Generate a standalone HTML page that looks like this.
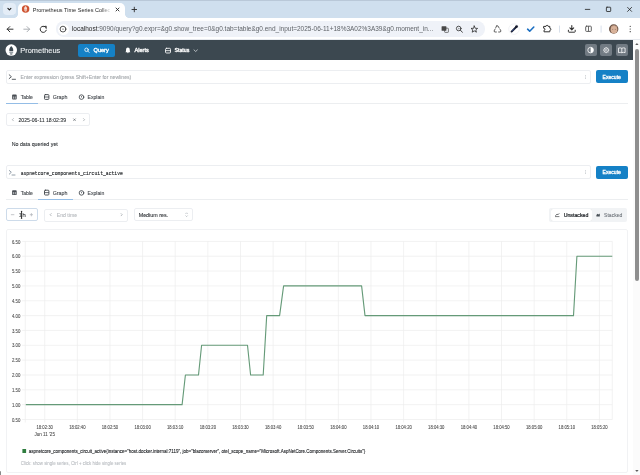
<!DOCTYPE html>
<html><head><meta charset="utf-8">
<style>
html,body{margin:0;padding:0;width:640px;height:475px;overflow:hidden;background:#fff;font-family:"Liberation Sans",sans-serif;}
.a{position:absolute;box-sizing:border-box;}
svg{position:absolute;overflow:visible;will-change:transform;}
.ic{fill:none;stroke-linecap:round;stroke-linejoin:round;}
.box{position:absolute;box-sizing:border-box;border:0.7px solid #eceef1;border-radius:2px;background:#fff;}
</style></head><body>
<!-- ============ CHROME TAB STRIP ============ -->
<div class="a" style="left:0;top:0;width:640px;height:17.8px;background:#cfdfee"></div>
<div class="a" style="left:0;top:0;width:640px;height:1px;background:#b9c8d8"></div>
<div class="a" style="left:2.6px;top:2.8px;width:13px;height:12.6px;border-radius:4px;background:#e4edf7"></div>
<div class="a" style="left:18px;top:2.6px;width:107px;height:17px;background:#fff;border-radius:5px 5px 0 0"></div>
<div class="a" style="left:14px;top:13.8px;width:4px;height:4px;background:radial-gradient(circle at 0 0,#cfdfee 3.6px,#fff 4.2px)"></div>
<div class="a" style="left:125px;top:13.8px;width:4px;height:4px;background:radial-gradient(circle at 100% 0,#cfdfee 3.6px,#fff 4.2px)"></div>
<svg style="left:0;top:0" width="640" height="40">
  <path d="M7.9 8.3 L9.4 9.8 L10.9 8.3" class="ic" stroke="#1f1f1f" stroke-width="1.1"/>
  <!-- favicon -->
  <circle cx="25.6" cy="8.95" r="3.75" fill="#cf5533"/>
  <path d="M25.6 6.1 C24.1 7.3 24 8.6 24.2 9.8 L27 9.8 C27.2 8.6 27.1 7.3 25.6 6.1 Z M24.3 10.3 h2.6 v0.8 h-2.6 Z" fill="#f4ddd5"/>
  <path d="M24.9 11.5 h1.4" stroke="#f4ddd5" stroke-width="0.5"/>
  <!-- tab close -->
  <path d="M116 8 L119 11 M119 8 L116 11" class="ic" stroke="#2a2a2a" stroke-width="0.9"/>
  <!-- new tab plus -->
  <path d="M134.3 7.2 V11.8 M132 9.5 H136.6" class="ic" stroke="#2a2a2a" stroke-width="0.9"/>
  <!-- window controls -->
  <path d="M585.3 9.4 H589.8" class="ic" stroke="#1f1f1f" stroke-width="0.8"/>
  <rect x="606.4" y="7.2" width="4.3" height="4.3" rx="0.6" class="ic" stroke="#1f1f1f" stroke-width="0.8"/>
  <path d="M627.6 7.4 L631.6 11.4 M631.6 7.4 L627.6 11.4" class="ic" stroke="#1f1f1f" stroke-width="0.8"/>
</svg>

<!-- ============ CHROME TOOLBAR ============ -->
<div class="a" style="left:0;top:17.8px;width:640px;height:22.2px;background:#fff;border-radius:0 4px 0 0"></div>
<div class="a" style="left:0;top:39.3px;width:640px;height:0.7px;background:#e6e9ee"></div>
<div class="a" style="left:55.8px;top:21.3px;width:429.2px;height:15.6px;border-radius:7.8px;background:#eff2f8"></div>
<div class="a" style="left:57.5px;top:23.6px;width:11px;height:11px;border-radius:50%;background:#fff"></div>
<svg style="left:0;top:0" width="640" height="40">
  <!-- back -->
  <path d="M13 29.2 H7.2 M9.8 26.6 L7.2 29.2 L9.8 31.8" class="ic" stroke="#2a2a2a" stroke-width="0.95"/>
  <!-- forward -->
  <path d="M23.8 29.2 H29.6 M27 26.6 L29.6 29.2 L27 31.8" class="ic" stroke="#a8abb0" stroke-width="0.95"/>
  <!-- reload -->
  <path d="M45.6 27.2 A3.1 3.1 0 1 0 46.3 30.2" class="ic" stroke="#2a2a2a" stroke-width="0.95"/>
  <path d="M43.9 26.6 L46.2 26.2 L46.2 28.4" class="ic" stroke="#2a2a2a" stroke-width="0.95"/>
  <!-- site info -->
  <circle cx="63" cy="29.1" r="2.9" class="ic" stroke="#2a2a2a" stroke-width="0.8"/>
  <circle cx="63" cy="29.1" r="0.55" fill="#2a2a2a"/>
  <!-- translate -->
  <rect x="441.6" y="26.2" width="4.8" height="4.6" rx="0.6" fill="#474747"/>
  <rect x="444.6" y="28.2" width="3.8" height="4.2" rx="0.6" fill="none" stroke="#474747" stroke-width="0.7"/>
  <!-- zoom -->
  <circle cx="458.7" cy="28.5" r="2.3" class="ic" stroke="#2a2a2a" stroke-width="0.8"/>
  <path d="M460.4 30.2 L462.4 32.2" class="ic" stroke="#2a2a2a" stroke-width="0.9"/>
  <path d="M458 28.6 H459.6 M458.8 27.8 V29.4" stroke="#6a6a6a" stroke-width="0.45"/>
  <!-- star -->
  <path d="M474.3 26 L475.3 28.3 L477.6 28.4 L475.8 29.9 L476.4 32.2 L474.3 30.9 L472.2 32.2 L472.8 29.9 L471 28.4 L473.3 28.3 Z" class="ic" stroke="#2a2a2a" stroke-width="0.8"/>
  <!-- recycle-like ext -->
  <path d="M496.6 25.9 L497.9 25.9 L499.2 28.1 M500.1 29.4 L501 31 L500.3 32 L498.6 32 M496.4 32 L494.6 32 L494 31 L495.2 28.9 M495.8 27.6 L496.6 25.9" class="ic" stroke="#474747" stroke-width="0.85"/>
  <!-- eyedropper in circle -->
  <circle cx="514" cy="29.1" r="5.3" fill="#fff" stroke="#eceef2" stroke-width="0.7"/>
  <path d="M511.6 31.6 L516.2 27" class="ic" stroke="#161b2e" stroke-width="1.9"/>
  <circle cx="516.6" cy="26.6" r="1.35" fill="#161b2e"/>
  <path d="M512.2 31 L514.2 29" class="ic" stroke="#3b5bb0" stroke-width="0.7"/>
  <!-- blue check -->
  <path d="M527.6 29.2 L529.7 31.2 L533.8 27" class="ic" stroke="#1b6fc2" stroke-width="1.6"/>
  <!-- puzzle -->
  <path d="M544 26.4 H546 A1.1 1.1 0 0 1 548.2 26.4 H549.8 V28.2 A1.1 1.1 0 0 1 549.8 30.4 V31.8 H544 V30.2 A1 1 0 0 0 544 28.2 Z" class="ic" stroke="#333" stroke-width="1"/>
  <path d="M559.5 25.6 V32.6" stroke="#c7d3e3" stroke-width="0.7"/>
  <!-- download -->
  <path d="M571.8 25.6 V29.6 M569.9 27.9 L571.8 29.8 L573.7 27.9" class="ic" stroke="#333" stroke-width="1.1"/>
  <path d="M568.4 30.2 V31.6 Q568.4 32.2 569 32.2 H574.6 Q575.2 32.2 575.2 31.6 V30.2" class="ic" stroke="#333" stroke-width="1"/>
  <!-- sidebar -->
  <rect x="585.7" y="26.2" width="5.6" height="5.2" rx="0.7" class="ic" stroke="#5a5a5a" stroke-width="0.95"/>
  <path d="M588.5 26.2 V31.4" stroke="#5a5a5a" stroke-width="0.9"/>
  <path d="M601.1 25.6 V32.6" stroke="#c7d3e3" stroke-width="0.7"/>
  <!-- avatar -->
  <circle cx="613.7" cy="29" r="4.7" fill="#6a5244"/>
  <ellipse cx="614" cy="29.6" rx="3.4" ry="3.9" fill="#d8b29a"/>
  <path d="M610.9 27.2 A3.4 3 0 0 1 617 27.2" fill="none" stroke="#c09a84" stroke-width="0.8"/>
  <path d="M612 29.4 H613.2 M614.8 29.4 H616" stroke="#7a6052" stroke-width="0.5"/>
  <!-- kebab -->
  <circle cx="630.2" cy="26.3" r="0.6" fill="#2a2a2a"/>
  <circle cx="630.2" cy="29" r="0.6" fill="#2a2a2a"/>
  <circle cx="630.2" cy="31.7" r="0.6" fill="#2a2a2a"/>
</svg>

<!-- ============ PROMETHEUS NAVBAR ============ -->
<div class="a" style="left:0;top:40px;width:633px;height:20px;background:#3c4850"></div>
<svg style="left:0;top:0" width="640" height="70">
  <circle cx="11.24" cy="50.08" r="5.75" fill="#fff"/>
  <path d="M11.24 45.9 C9.3 47.9 9.0 49.6 9.4 51.3 L13.1 51.3 C13.5 49.6 13.2 47.9 11.24 45.9 Z" fill="#3c4850"/>
  <rect x="9.3" y="51.9" width="3.9" height="1" fill="#8d969e"/>
  <path d="M9.9 53.4 H12.6 L12.2 54.4 H10.3 Z" fill="#3c4850"/>
</svg>
<div class="a" style="left:78px;top:44px;width:36.5px;height:13px;border-radius:2px;background:#1581c6"></div>
<svg style="left:0;top:0" width="640" height="70">
  <circle cx="86.5" cy="49.8" r="1.75" class="ic" stroke="#fff" stroke-width="0.8"/>
  <path d="M87.8 51.1 L89.1 52.4" class="ic" stroke="#fff" stroke-width="0.8"/>
  <!-- bell -->
  <path d="M125.5 52.2 H130.3 Q129.7 51.4 129.8 50.2 V49.7 A1.9 2.1 0 0 0 126 49.7 V50.2 Q126.1 51.4 125.5 52.2 Z" fill="#fff"/>
  <circle cx="127.9" cy="52.6" r="0.65" fill="#fff"/>
  <!-- status -->
  <rect x="165.5" y="48.3" width="5" height="4.7" rx="1" class="ic" stroke="#fff" stroke-width="0.85"/>
  <path d="M165.5 50.65 H170.5" stroke="#fff" stroke-width="0.8"/>
  <path d="M194 49.9 L195.7 51.5 L197.4 49.9" class="ic" stroke="#dfe3e6" stroke-width="0.75"/>
</svg>
<div class="a" style="left:584.8px;top:44.2px;width:11.8px;height:11.8px;border-radius:2px;background:#727b83"></div>
<div class="a" style="left:600.4px;top:44.2px;width:11.8px;height:11.8px;border-radius:2px;background:#727b83"></div>
<div class="a" style="left:616px;top:44.2px;width:11.8px;height:11.8px;border-radius:2px;background:#727b83"></div>
<svg style="left:0;top:0" width="640" height="70">
  <circle cx="590.6" cy="50.1" r="2.8" fill="none" stroke="#fff" stroke-width="0.8"/>
  <path d="M590.6 47.3 A2.8 2.8 0 0 1 590.6 52.9 Z" fill="#fff"/>
  <circle cx="606.2" cy="50.1" r="2.3" fill="none" stroke="#fff" stroke-width="0.8"/>
  <circle cx="606.2" cy="50.1" r="0.9" fill="none" stroke="#fff" stroke-width="0.55"/>
  <path d="M606.2 47 V47.6 M606.2 52.6 V53.2 M603.1 50.1 H603.7 M608.7 50.1 H609.3 M604 47.9 L604.4 48.3 M608 51.9 L608.4 52.3 M608.4 47.9 L608 48.3 M604.4 51.9 L604 52.3" stroke="#fff" stroke-width="0.7"/>
  <path d="M621.8 48.3 Q620.3 47.5 618.5 48.1 V52.6 Q620.3 52 621.8 52.7 Q623.3 52 625.1 52.6 V48.1 Q623.3 47.5 621.8 48.3 Z M621.8 48.3 V52.7" fill="none" stroke="#fff" stroke-width="0.8" stroke-linejoin="round"/>
</svg>

<!-- ============ SCROLLBAR ============ -->
<div class="a" style="left:633px;top:40px;width:7px;height:435px;background:#fbfbfb"></div>
<div class="a" style="left:634.9px;top:48.6px;width:4.2px;height:232px;background:#8e8e8e;border-radius:2.1px"></div>
<svg style="left:0;top:0" width="640" height="475">
  <path d="M635.2 45 L636.9 43.1 L638.6 45 Z" fill="#5f5f5f"/>
  <path d="M635.2 470 L636.9 472 L638.6 470 Z" fill="#5f5f5f"/>
</svg>

<!-- ============ PANEL 1 ============ -->
<div class="box" style="left:5.8px;top:70px;width:585.4px;height:13.5px"></div>
<svg style="left:0;top:0" width="640" height="475">
  <path d="M9.2 74.8 L11.4 76.7 L9.2 78.6 M12.2 79.3 H15.5" class="ic" stroke="#3d4349" stroke-width="0.85"/>
  <circle cx="585.6" cy="75.6" r="0.4" fill="#868e96"/><circle cx="585.6" cy="77" r="0.4" fill="#868e96"/><circle cx="585.6" cy="78.4" r="0.4" fill="#868e96"/>
</svg>
<div class="a" style="left:596px;top:70.4px;width:31.5px;height:13px;border-radius:2px;background:#1581c6"></div>

<!-- tabs 1 -->
<div class="a" style="left:5.7px;top:103px;width:622.3px;height:0.8px;background:#eceef0"></div>
<div class="a" style="left:5.7px;top:102.8px;width:32.7px;height:1.1px;background:#94bde6"></div>
<svg style="left:0;top:0" width="640" height="475">
  <rect x="12.1" y="94.6" width="4.6" height="4.9" rx="0.9" fill="#4a4f55"/>
  <rect x="12.9" y="96.5" width="1.1" height="2.2" fill="#fff" opacity="0.55"/><rect x="14.7" y="96.5" width="1.2" height="2.2" fill="#fff" opacity="0.55"/>
  
  <rect x="44.5" y="94.6" width="4.4" height="4.8" rx="0.8" class="ic" stroke="#3f444a" stroke-width="0.9"/>
  <path d="M44.5 97 H48.9" stroke="#3f444a" stroke-width="0.8"/>
  <circle cx="81.5" cy="97.1" r="2.3" class="ic" stroke="#3f444a" stroke-width="0.85"/>
  <path d="M81.5 96 V97.5" stroke="#3f444a" stroke-width="0.7"/>
</svg>

<!-- date picker -->
<div class="box" style="left:6.1px;top:112.5px;width:84.1px;height:13.9px"></div>
<svg style="left:0;top:0" width="640" height="475">
  <path d="M13.4 118.6 L12.3 119.7 L13.4 120.8" class="ic" stroke="#868e96" stroke-width="0.6"/>
  <path d="M73.6 118.8 L75.4 120.6 M75.4 118.8 L73.6 120.6" class="ic" stroke="#495057" stroke-width="0.6"/>
  <path d="M83.5 118.6 L84.6 119.7 L83.5 120.8" class="ic" stroke="#868e96" stroke-width="0.6"/>
</svg>

<!-- ============ PANEL 2 ============ -->
<div class="box" style="left:5.8px;top:165.4px;width:585.6px;height:13.5px"></div>
<svg style="left:0;top:0" width="640" height="475">
  <path d="M9.3 170.5 L11.3 172.3 L9.3 174.1 M12 175 H15" class="ic" stroke="#6f7d8c" stroke-width="0.75"/>
  <circle cx="585.6" cy="170.6" r="0.4" fill="#868e96"/><circle cx="585.6" cy="172" r="0.4" fill="#868e96"/><circle cx="585.6" cy="173.4" r="0.4" fill="#868e96"/>
</svg>
<div class="a" style="left:595.9px;top:165.7px;width:31.7px;height:13.1px;border-radius:2px;background:#1581c6"></div>

<!-- tabs 2 -->
<div class="a" style="left:5.7px;top:198.6px;width:622.3px;height:0.8px;background:#eceef0"></div>
<div class="a" style="left:38.4px;top:198.6px;width:34.6px;height:1.1px;background:#94bde6"></div>
<svg style="left:0;top:0" width="640" height="475">
  <rect x="12.1" y="190.2" width="4.6" height="4.9" rx="0.9" fill="#4a4f55"/>
  <rect x="12.9" y="192.1" width="1.1" height="2.2" fill="#fff" opacity="0.55"/><rect x="14.7" y="192.1" width="1.2" height="2.2" fill="#fff" opacity="0.55"/>
  
  <rect x="44.5" y="190.2" width="4.4" height="4.8" rx="0.8" class="ic" stroke="#3f444a" stroke-width="0.9"/>
  <path d="M44.5 192.6 H48.9" stroke="#3f444a" stroke-width="0.8"/>
  <circle cx="81.5" cy="192.9" r="2.3" class="ic" stroke="#3f444a" stroke-width="0.85"/>
  <path d="M81.5 191.8 V193.3" stroke="#3f444a" stroke-width="0.7"/>
</svg>

<!-- controls -->
<div class="box" style="left:6px;top:208.4px;width:31.8px;height:12.9px;border-color:#cddbea"></div>
<svg style="left:0;top:0" width="640" height="475">
  <path d="M10.9 214.7 H14.3" stroke="#b4b8bc" stroke-width="0.8"/>
  <path d="M29.8 214.7 H33 M31.4 213.1 V216.3" stroke="#b4b8bc" stroke-width="0.8"/>
</svg>
<div class="box" style="left:43.5px;top:208.6px;width:84.6px;height:13px"></div>
<svg style="left:0;top:0" width="640" height="475">
  <path d="M51.2 213.6 L50.1 214.7 L51.2 215.8" class="ic" stroke="#868e96" stroke-width="0.6"/>
  <path d="M121.1 213.6 L122.2 214.7 L121.1 215.8" class="ic" stroke="#868e96" stroke-width="0.6"/>
</svg>
<div class="box" style="left:134.3px;top:208.2px;width:59.1px;height:13.3px"></div>
<svg style="left:0;top:0" width="640" height="475">
  <path d="M185.8 213.6 L186.6 212.8 L187.4 213.6 M185.8 215.8 L186.6 216.6 L187.4 215.8" class="ic" stroke="#868e96" stroke-width="0.5"/>
</svg>
<!-- segmented -->
<div class="a" style="left:548.6px;top:208.1px;width:78.6px;height:13.8px;border-radius:2px;background:#f1f3f5"></div>
<div class="a" style="left:550.5px;top:209px;width:41px;height:12px;border-radius:2px;background:#fff;box-shadow:0 0 0.6px rgba(0,0,0,.15)"></div>
<svg style="left:0;top:0" width="640" height="475">
  <path d="M555.4 216.6 H559 M555.6 215.6 L557 214 L558 214.8 L559 213.6" class="ic" stroke="#212529" stroke-width="0.6"/>
  <path d="M596.4 216.4 L596.4 215 L597.6 213.8 L598.6 214.6 L599.8 213.6 V216.4 Z" fill="#495057"/>
</svg>

<!-- ============ GRAPH PANEL ============ -->
<div class="box" style="left:5.8px;top:229.4px;width:621.8px;height:243.9px;border-color:#f1f2f4"></div>
<div class="a" style="left:0;top:471px;width:1.3px;height:4px;background:#8a8a8a;border-radius:0 2px 0 0"></div>
<svg style="left:0;top:0" width="640" height="475">
<defs><linearGradient id="fadeTab" gradientUnits="userSpaceOnUse" x1="101" y1="0" x2="111" y2="0"><stop offset="0" stop-color="#1f1f1f"/><stop offset="1" stop-color="#1f1f1f" stop-opacity="0"/></linearGradient></defs>
<path d="M22.10 241.40 H612.30" stroke="#ededed" stroke-width="0.7"/>
<path d="M22.10 256.24 H612.30" stroke="#ededed" stroke-width="0.7"/>
<path d="M22.10 271.08 H612.30" stroke="#ededed" stroke-width="0.7"/>
<path d="M22.10 285.93 H612.30" stroke="#ededed" stroke-width="0.7"/>
<path d="M22.10 300.77 H612.30" stroke="#ededed" stroke-width="0.7"/>
<path d="M22.10 315.61 H612.30" stroke="#ededed" stroke-width="0.7"/>
<path d="M22.10 330.45 H612.30" stroke="#ededed" stroke-width="0.7"/>
<path d="M22.10 345.29 H612.30" stroke="#ededed" stroke-width="0.7"/>
<path d="M22.10 360.13 H612.30" stroke="#ededed" stroke-width="0.7"/>
<path d="M22.10 374.98 H612.30" stroke="#ededed" stroke-width="0.7"/>
<path d="M22.10 389.82 H612.30" stroke="#ededed" stroke-width="0.7"/>
<path d="M22.10 404.66 H612.30" stroke="#ededed" stroke-width="0.7"/>
<path d="M22.10 419.50 H612.30" stroke="#ededed" stroke-width="0.7"/>
<path d="M25.30 241.40 V422.50" stroke="#ededed" stroke-width="0.7"/>
<path d="M612.30 241.40 V419.50" stroke="#ededed" stroke-width="0.7"/>
<path d="M44.70 241.40 V422.50" stroke="#ededed" stroke-width="0.7"/>
<path d="M77.33 241.40 V422.50" stroke="#ededed" stroke-width="0.7"/>
<path d="M109.96 241.40 V422.50" stroke="#ededed" stroke-width="0.7"/>
<path d="M142.59 241.40 V422.50" stroke="#ededed" stroke-width="0.7"/>
<path d="M175.22 241.40 V422.50" stroke="#ededed" stroke-width="0.7"/>
<path d="M207.85 241.40 V422.50" stroke="#ededed" stroke-width="0.7"/>
<path d="M240.48 241.40 V422.50" stroke="#ededed" stroke-width="0.7"/>
<path d="M273.11 241.40 V422.50" stroke="#ededed" stroke-width="0.7"/>
<path d="M305.74 241.40 V422.50" stroke="#ededed" stroke-width="0.7"/>
<path d="M338.37 241.40 V422.50" stroke="#ededed" stroke-width="0.7"/>
<path d="M371.00 241.40 V422.50" stroke="#ededed" stroke-width="0.7"/>
<path d="M403.63 241.40 V422.50" stroke="#ededed" stroke-width="0.7"/>
<path d="M436.26 241.40 V422.50" stroke="#ededed" stroke-width="0.7"/>
<path d="M468.89 241.40 V422.50" stroke="#ededed" stroke-width="0.7"/>
<path d="M501.52 241.40 V422.50" stroke="#ededed" stroke-width="0.7"/>
<path d="M534.15 241.40 V422.50" stroke="#ededed" stroke-width="0.7"/>
<path d="M566.78 241.40 V422.50" stroke="#ededed" stroke-width="0.7"/>
<path d="M599.41 241.40 V422.50" stroke="#ededed" stroke-width="0.7"/>
<g font-family="Liberation Sans" font-size="4.6" fill="#4a4a4a" stroke="#4a4a4a" stroke-width="0.08"><text x="20.3" y="243.50" text-anchor="end" textLength="8.4" lengthAdjust="spacingAndGlyphs">6.50</text>
<text x="20.3" y="258.34" text-anchor="end" textLength="8.4" lengthAdjust="spacingAndGlyphs">6.00</text>
<text x="20.3" y="273.18" text-anchor="end" textLength="8.4" lengthAdjust="spacingAndGlyphs">5.50</text>
<text x="20.3" y="288.03" text-anchor="end" textLength="8.4" lengthAdjust="spacingAndGlyphs">5.00</text>
<text x="20.3" y="302.87" text-anchor="end" textLength="8.4" lengthAdjust="spacingAndGlyphs">4.50</text>
<text x="20.3" y="317.71" text-anchor="end" textLength="8.4" lengthAdjust="spacingAndGlyphs">4.00</text>
<text x="20.3" y="332.55" text-anchor="end" textLength="8.4" lengthAdjust="spacingAndGlyphs">3.50</text>
<text x="20.3" y="347.39" text-anchor="end" textLength="8.4" lengthAdjust="spacingAndGlyphs">3.00</text>
<text x="20.3" y="362.23" text-anchor="end" textLength="8.4" lengthAdjust="spacingAndGlyphs">2.50</text>
<text x="20.3" y="377.08" text-anchor="end" textLength="8.4" lengthAdjust="spacingAndGlyphs">2.00</text>
<text x="20.3" y="391.92" text-anchor="end" textLength="8.4" lengthAdjust="spacingAndGlyphs">1.50</text>
<text x="20.3" y="406.76" text-anchor="end" textLength="8.4" lengthAdjust="spacingAndGlyphs">1.00</text>
<text x="20.3" y="421.60" text-anchor="end" textLength="8.4" lengthAdjust="spacingAndGlyphs">0.50</text>
<text x="36.50" y="428.6" textLength="16.4" lengthAdjust="spacingAndGlyphs">18:02:30</text>
<text x="69.13" y="428.6" textLength="16.4" lengthAdjust="spacingAndGlyphs">18:02:40</text>
<text x="101.76" y="428.6" textLength="16.4" lengthAdjust="spacingAndGlyphs">18:02:50</text>
<text x="134.39" y="428.6" textLength="16.4" lengthAdjust="spacingAndGlyphs">18:03:00</text>
<text x="167.02" y="428.6" textLength="16.4" lengthAdjust="spacingAndGlyphs">18:03:10</text>
<text x="199.65" y="428.6" textLength="16.4" lengthAdjust="spacingAndGlyphs">18:03:20</text>
<text x="232.28" y="428.6" textLength="16.4" lengthAdjust="spacingAndGlyphs">18:03:30</text>
<text x="264.91" y="428.6" textLength="16.4" lengthAdjust="spacingAndGlyphs">18:03:40</text>
<text x="297.54" y="428.6" textLength="16.4" lengthAdjust="spacingAndGlyphs">18:03:50</text>
<text x="330.17" y="428.6" textLength="16.4" lengthAdjust="spacingAndGlyphs">18:04:00</text>
<text x="362.80" y="428.6" textLength="16.4" lengthAdjust="spacingAndGlyphs">18:04:10</text>
<text x="395.43" y="428.6" textLength="16.4" lengthAdjust="spacingAndGlyphs">18:04:20</text>
<text x="428.06" y="428.6" textLength="16.4" lengthAdjust="spacingAndGlyphs">18:04:30</text>
<text x="460.69" y="428.6" textLength="16.4" lengthAdjust="spacingAndGlyphs">18:04:40</text>
<text x="493.32" y="428.6" textLength="16.4" lengthAdjust="spacingAndGlyphs">18:04:50</text>
<text x="525.95" y="428.6" textLength="16.4" lengthAdjust="spacingAndGlyphs">18:05:00</text>
<text x="558.58" y="428.6" textLength="16.4" lengthAdjust="spacingAndGlyphs">18:05:10</text>
<text x="591.21" y="428.6" textLength="16.4" lengthAdjust="spacingAndGlyphs">18:05:20</text>
<text x="34.50" y="435.6" textLength="20.4" lengthAdjust="spacingAndGlyphs">Jun 11 '25</text></g>
<path d="M25.80 404.66 L182.10 404.66 L185.40 374.98 L198.50 374.98 L201.60 345.29 L247.50 345.29 L250.60 374.98 L263.20 374.98 L266.70 315.61 L279.60 315.61 L283.60 285.93 L361.60 285.93 L365.00 315.61 L573.50 315.61 L576.90 256.24 L612.30 256.24" fill="none" stroke="#659a78" stroke-width="1.12" stroke-linejoin="round"/>
<rect x="22.4" y="449" width="3.7" height="4" fill="#2f7d3f"/>
<text x="32.75" y="11.80" font-family="Liberation Sans" font-size="5.9" font-weight="normal" fill="url(#fadeTab)" textLength="77.61" lengthAdjust="spacingAndGlyphs" >Prometheus Time Series Collec</text>
<text x="71.89" y="31.40" font-family="Liberation Sans" font-size="6.8" font-weight="normal" fill="#5f6368" textLength="361.32" lengthAdjust="spacingAndGlyphs" ><tspan fill="#1f1f1f">localhost</tspan>:9090/query?g0.expr=&amp;g0.show_tree=0&amp;g0.tab=table&amp;g0.end_input=2025-06-11+18%3A02%3A39&amp;g0.moment_in...</text>
<text x="20.39" y="53.00" font-family="Liberation Sans" font-size="6.9" font-weight="normal" fill="#f1f3f5" textLength="39.83" lengthAdjust="spacingAndGlyphs" stroke="#f1f3f5" stroke-width="0.09">Prometheus</text>
<text x="93.58" y="52.10" font-family="Liberation Sans" font-size="5.4" font-weight="normal" fill="#fff" textLength="15.15" lengthAdjust="spacingAndGlyphs" stroke="#fff" stroke-width="0.32">Query</text>
<text x="134.43" y="52.30" font-family="Liberation Sans" font-size="5.4" font-weight="normal" fill="#fff" textLength="14.40" lengthAdjust="spacingAndGlyphs" stroke="#fff" stroke-width="0.32">Alerts</text>
<text x="174.43" y="52.30" font-family="Liberation Sans" font-size="5.4" font-weight="normal" fill="#fff" textLength="14.90" lengthAdjust="spacingAndGlyphs" stroke="#fff" stroke-width="0.32">Status</text>
<text x="20.58" y="79.20" font-family="Liberation Sans" font-size="5.4" font-weight="normal" fill="#a2a6aa" textLength="110.65" lengthAdjust="spacingAndGlyphs" stroke="#a2a6aa" stroke-width="0.09">Enter expression (press Shift+Enter for newlines)</text>
<text x="602.49" y="78.80" font-family="Liberation Sans" font-size="5.2" font-weight="normal" fill="#fff" textLength="18.42" lengthAdjust="spacingAndGlyphs" stroke="#fff" stroke-width="0.3">Execute</text>
<text x="20.69" y="98.80" font-family="Liberation Sans" font-size="5.2" font-weight="normal" fill="#3a3f44" textLength="12.12" lengthAdjust="spacingAndGlyphs" stroke="#3a3f44" stroke-width="0.09">Table</text>
<text x="52.69" y="98.80" font-family="Liberation Sans" font-size="5.2" font-weight="normal" fill="#3a3f44" textLength="14.72" lengthAdjust="spacingAndGlyphs" stroke="#3a3f44" stroke-width="0.09">Graph</text>
<text x="87.49" y="98.80" font-family="Liberation Sans" font-size="5.2" font-weight="normal" fill="#3a3f44" textLength="16.82" lengthAdjust="spacingAndGlyphs" stroke="#3a3f44" stroke-width="0.09">Explain</text>
<text x="20.69" y="194.60" font-family="Liberation Sans" font-size="5.2" font-weight="normal" fill="#3a3f44" textLength="12.12" lengthAdjust="spacingAndGlyphs" stroke="#3a3f44" stroke-width="0.09">Table</text>
<text x="52.69" y="194.60" font-family="Liberation Sans" font-size="5.2" font-weight="normal" fill="#3a3f44" textLength="14.72" lengthAdjust="spacingAndGlyphs" stroke="#3a3f44" stroke-width="0.09">Graph</text>
<text x="87.49" y="194.60" font-family="Liberation Sans" font-size="5.2" font-weight="normal" fill="#3a3f44" textLength="16.82" lengthAdjust="spacingAndGlyphs" stroke="#3a3f44" stroke-width="0.09">Explain</text>
<text x="18.48" y="122.00" font-family="Liberation Sans" font-size="5.4" font-weight="normal" fill="#2b2f33" textLength="47.65" lengthAdjust="spacingAndGlyphs" stroke="#2b2f33" stroke-width="0.09">2025-06-11 18:02:39</text>
<text x="11.69" y="146.00" font-family="Liberation Sans" font-size="5.2" font-weight="normal" fill="#2b2f33" textLength="46.12" lengthAdjust="spacingAndGlyphs" stroke="#2b2f33" stroke-width="0.09">No data queried yet</text>
<text x="20.65" y="174.60" font-family="Liberation Mono" font-size="5.9" font-weight="normal" fill="#1f2226" textLength="102.21" lengthAdjust="spacingAndGlyphs" stroke="#1f2226" stroke-width="0.15">aspnetcore_components_circuit_active</text>
<text x="602.49" y="174.20" font-family="Liberation Sans" font-size="5.2" font-weight="normal" fill="#fff" textLength="18.42" lengthAdjust="spacingAndGlyphs" stroke="#fff" stroke-width="0.3">Execute</text>
<text x="18.68" y="216.80" font-family="Liberation Sans" font-size="5.3" font-weight="normal" fill="#2b2f33" textLength="7.14" lengthAdjust="spacingAndGlyphs" stroke="#2b2f33" stroke-width="0.09">1h</text>
<text x="56.69" y="216.80" font-family="Liberation Sans" font-size="5.2" font-weight="normal" fill="#b4b8bc" textLength="20.42" lengthAdjust="spacingAndGlyphs" stroke="#b4b8bc" stroke-width="0.09">End time</text>
<text x="138.69" y="217.00" font-family="Liberation Sans" font-size="5.2" font-weight="normal" fill="#2b2f33" textLength="29.42" lengthAdjust="spacingAndGlyphs" stroke="#2b2f33" stroke-width="0.09">Medium res.</text>
<text x="563.68" y="216.90" font-family="Liberation Sans" font-size="5.3" font-weight="normal" fill="#212529" textLength="24.64" lengthAdjust="spacingAndGlyphs" stroke="#212529" stroke-width="0.22">Unstacked</text>
<text x="604.08" y="216.90" font-family="Liberation Sans" font-size="5.3" font-weight="normal" fill="#6f757b" textLength="18.34" lengthAdjust="spacingAndGlyphs" stroke="#6f757b" stroke-width="0.09">Stacked</text>
<text x="28.68" y="453.00" font-family="Liberation Sans" font-size="5.4" font-weight="normal" fill="#1a1d20" textLength="336.65" lengthAdjust="spacingAndGlyphs" stroke="#1a1d20" stroke-width="0.12">aspnetcore_components_circuit_active{instance=&quot;host.docker.internal:7119&quot;, job=&quot;blazorserver&quot;, otel_scope_name=&quot;Microsoft.AspNetCore.Components.Server.Circuits&quot;}</text>
<text x="20.78" y="465.20" font-family="Liberation Sans" font-size="5.3" font-weight="normal" fill="#b9bdc1" textLength="105.54" lengthAdjust="spacingAndGlyphs" stroke="#b9bdc1" stroke-width="0.1">Click: show single series, Ctrl + click hide single series</text>
<path d="M21.55 211.4 V218.3" fill="none" stroke="#fff" stroke-width="1.9" opacity="0.6"/>
<path d="M21.55 211.4 V218.3 M20.9 211.4 H22.2 M20.9 218.3 H22.2" fill="none" stroke="#111" stroke-width="0.85"/>
</svg>
</body></html>
